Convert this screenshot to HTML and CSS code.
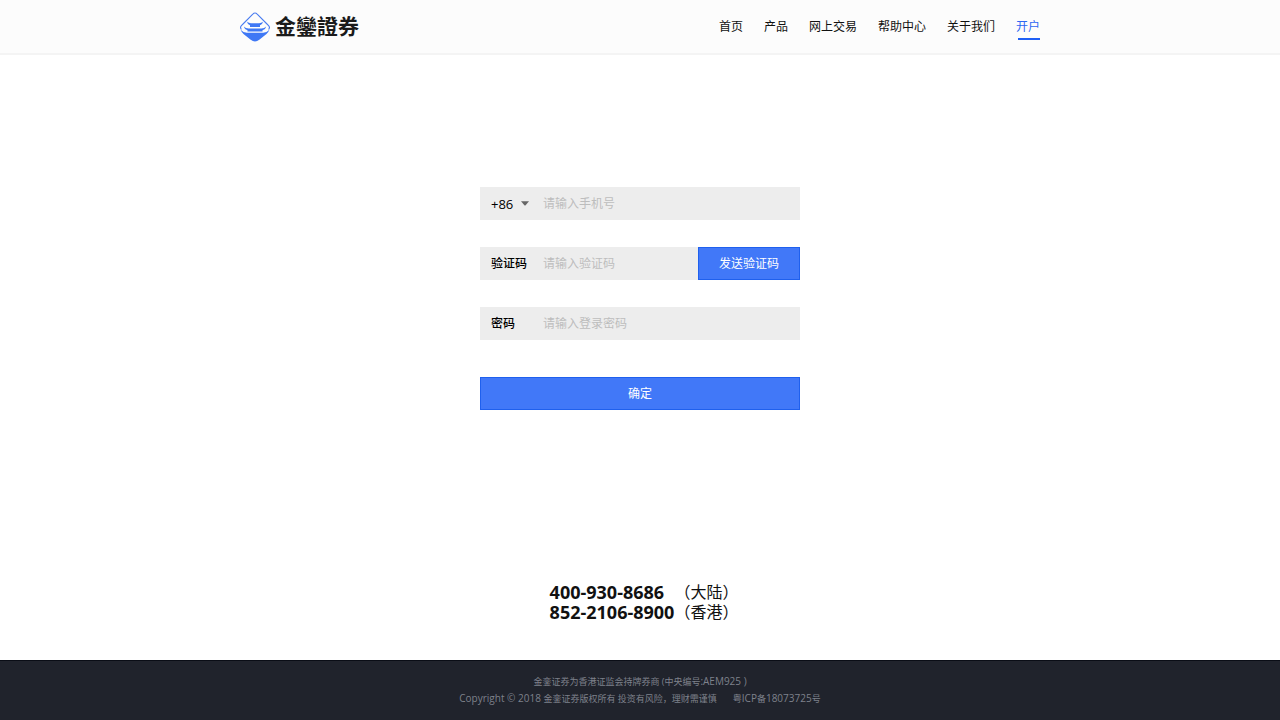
FILE: index.html
```html
<!DOCTYPE html>
<html lang="zh-CN">
<head>
<meta charset="utf-8">
<meta name="viewport" content="width=device-width, initial-scale=1">
<title>金鑾證券 - 开户</title>
<link rel="stylesheet" href="styles.css">
</head>
<body>
<header class="site-header">
  <div class="header-inner">
    <a class="logo" href="#">
      <svg class="logo-mark" viewBox="0 0 30 30" aria-hidden="true">
        <path d="M3.500 11.500 12.800 2.200Q15 -.2 17.200 2.200L26.500 11.500L28.600 13.600Q30.300 15.500 28.600 17.500M3.500 11.500 1.400 13.600Q-.3 15.500 1.400 17.500" fill="none" stroke="#4a7cf0" stroke-width="1.100"/>
        <path d="M7 9.800Q9 11.400 11.500 11.200H18.500Q21 11.400 23 9.800Q22.500 12.600 20 13.200V15H10V13.200Q7.500 12.600 7 9.800Z" fill="#3f78f5"/>
        <path d="M3.800 14.400Q6 16.600 9 16.400H21Q24 16.600 26.200 14.400Q25.500 17.600 22.500 18.200V19.400H7.500V18.200Q4.500 17.600 3.800 14.400Z" fill="#3f78f5"/>
        <path d="M.6 17.800Q3.500 20.900 7 20.800H23Q26.500 20.900 29.400 17.800Q28.600 20 26.500 22L19.300 27.800Q15 31 10.700 27.800L3.500 22Q1.400 20 .6 17.800Z" fill="#3f78f5"/>
      </svg>
      <span class="logo-name">金鑾證券</span>
    </a>
    <nav class="nav">
      <a class="nav-link" href="#">首页</a>
      <a class="nav-link" href="#">产品</a>
      <a class="nav-link" href="#">网上交易</a>
      <a class="nav-link" href="#">帮助中心</a>
      <a class="nav-link" href="#">关于我们</a>
      <a class="nav-link nav-link-active" href="#" aria-current="page">开户</a>
    </nav>
  </div>
</header>

<main class="main">
  <form class="form">
    <div class="field">
      <div class="code-picker">
        <select class="code-select" aria-label="国家代码"><option>+86</option></select>
        <svg class="caret" viewBox="0 0 8 5" aria-hidden="true"><path d="M0 .3H8L4.600 4.300Q4 4.900 3.400 4.300Z" fill="#666"/></svg>
      </div>
      <input class="input" type="tel" aria-label="手机号" placeholder="请输入手机号">
    </div>
    <div class="field">
      <label class="label" for="captcha">验证码</label>
      <input class="input" id="captcha" type="text" placeholder="请输入验证码">
      <button class="button button-send" type="button">发送验证码</button>
    </div>
    <div class="field">
      <label class="label" for="password">密码</label>
      <input class="input" id="password" type="password" placeholder="请输入登录密码">
    </div>
    <button class="button button-submit" type="submit">确定</button>
  </form>

  <div class="contact">
    <strong class="phone">400-930-8686</strong><span>（大陆）</span>
    <strong class="phone">852-2106-8900</strong><span>（香港）</span>
  </div>
</main>

<footer class="site-footer">
  <p class="footer-line">金銮证券为香港证监会持牌券商 (中央编号<span class="latin">:AEM925 )</span></p>
  <p class="footer-line"><span class="latin">Copyright © 2018 </span>金銮证券版权所有 投资有风险，理财需谨慎<span class="record">粤<span class="latin">ICP</span>备<span class="latin">18073725</span>号</span></p>
</footer>
</body>
</html>
```
FILE: styles.css
```css
* {
  box-sizing: border-box;
}

body {
  display: flex;
  flex-direction: column;
  min-height: 100vh;
  margin: 0;
  background: #fff;
  color: #111;
  font: 12px/18px "Open Sans", "Noto Sans CJK SC", sans-serif;
}

a {
  color: inherit;
  text-decoration: none;
}

.site-header {
  padding: 0 20px;
  background: #fcfcfc;
  border-bottom: 2px solid #f4f4f4;
}

.header-inner {
  display: flex;
  align-items: center;
  justify-content: space-between;
  max-width: 800px;
  min-height: 53px;
  margin: 0 auto;
}

.logo {
  display: flex;
  align-items: center;
  gap: 5px;
}

.logo-mark {
  width: 30px;
  height: 30px;
}

.logo-name {
  padding-bottom: 3px;
  font-family: "Noto Sans CJK TC", sans-serif;
  font-size: 21px;
  font-weight: 700;
  line-height: 30px;
  color: #1a1a1a;
}

.nav {
  display: flex;
  gap: 21px;
}

.nav-link {
  padding: 4px 0;
}

.nav-link-active {
  color: #2c67f2;
  background: linear-gradient(#1f5ff5, #1f5ff5) right bottom / 22px 2px no-repeat;
}

.main {
  display: flex;
  flex: 1;
  flex-direction: column;
  align-items: center;
  padding: 132px 20px 38px;
}

.form {
  display: flex;
  flex-direction: column;
  gap: 27px;
  width: 100%;
  max-width: 320px;
}

.field {
  display: flex;
  height: 33px;
  background: #ededed;
}

.label,
.code-picker {
  display: flex;
  flex: 0 0 63px;
  align-items: center;
  padding-left: 11px;
  color: #000;
  font-weight: 500;
}

.code-picker {
  position: relative;
}

.code-select {
  width: 48px;
  padding: 0;
  border: 0;
  appearance: none;
  background: transparent;
  color: #000;
  font: inherit;
  font-size: 13px;
}

.caret {
  position: absolute;
  right: 14px;
  width: 8px;
  height: 5px;
  pointer-events: none;
}

.input {
  flex: 1;
  min-width: 0;
  padding: 0;
  border: 0;
  background: transparent;
  color: #111;
  font: inherit;
}

.input::placeholder {
  color: #bdbdbd;
}

.button {
  height: 33px;
  padding: 0;
  border: 1px solid #1f60ee;
  background: #4178f8;
  color: #fff;
  font: inherit;
  cursor: pointer;
}

.button-send {
  flex: 0 0 102px;
}

.button-submit {
  margin-top: 10px;
}

.contact {
  display: grid;
  grid-template-columns: auto auto;
  margin-top: auto;
  padding-left: 8px;
  font-size: 16px;
  line-height: 20px;
}

.phone {
  font-size: 18px;
}

.site-footer {
  padding: 12px 20px 13px;
  border-top: 1px solid #0a0d16;
  background: #20232c;
  color: #7e818b;
  font-size: 9px;
  line-height: 17px;
  text-align: center;
}

.footer-line {
  margin: 0;
}

.latin {
  font-size: 10px;
}

.record {
  margin-left: 16px;
}
```
